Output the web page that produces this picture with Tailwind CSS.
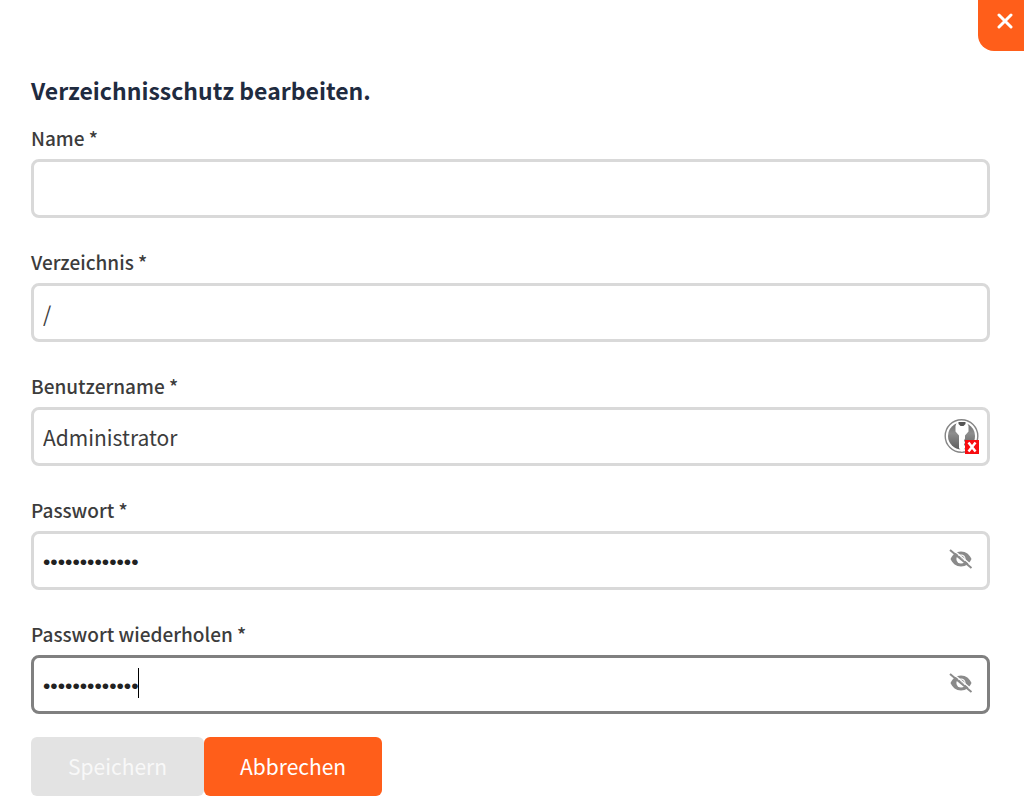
<!DOCTYPE html>
<html lang="de">
<head>
    <meta charset="UTF-8">
    <meta name="viewport" content="width=device-width, initial-scale=1.0">
    <title>Verzeichnisschutz bearbeiten</title>
    <script src="https://cdn.jsdelivr.net/npm/@tailwindcss/browser@4"></script>
</head>
<body class="bg-white font-['Noto_Sans_CJK_SC',sans-serif] text-[#3c3c3c]">
    <header class="flex justify-end">
        <button type="button" aria-label="Schließen" class="flex h-[51px] w-[46px] items-center justify-center rounded-bl-2xl bg-[#ff5e1a] pb-[9px] pl-[7px] text-white">
            <svg class="size-4" viewBox="0 0 16 16" fill="none" stroke="currentColor" stroke-width="3" stroke-linecap="round">
                <path d="M2 2l12 12M14 2L2 14" />
            </svg>
        </button>
    </header>

    <main class="pt-[23px] pr-[34px] pl-[31px]">
        <h1 class="text-[23px] leading-8 font-bold text-[#1f2b40]">Verzeichnisschutz bearbeiten.</h1>

        <form class="pt-4">
            <div class="mb-7">
                <label for="name" class="mb-[5px] block text-[19px] leading-8 font-medium">Name *</label>
                <input id="name" type="text" class="block h-[59px] w-full rounded-lg border-3 border-[#d9d9d9] px-[9px] text-[21px] outline-none">
            </div>

            <div class="mb-7">
                <label for="directory" class="mb-[5px] block text-[19px] leading-8 font-medium">Verzeichnis *</label>
                <input id="directory" type="text" value="/" class="block h-[59px] w-full rounded-lg border-3 border-[#d9d9d9] px-[9px] text-[21px] outline-none">
            </div>

            <div class="mb-7">
                <label for="username" class="mb-[5px] block text-[19px] leading-8 font-medium">Benutzername *</label>
                <div class="relative">
                    <input id="username" type="text" value="Administrator" class="block h-[59px] w-full rounded-lg border-3 border-[#d9d9d9] pr-14 pl-[9px] text-[21px] outline-none">
                    <svg class="absolute top-[11px] right-[10px] size-9" viewBox="0 0 36 36">
                        <defs>
                            <linearGradient id="disc" x1="0" y1="0" x2="0" y2="1">
                                <stop offset="0" stop-color="#6e6e6e" />
                                <stop offset="0.400" stop-color="#8e8e8e" />
                                <stop offset="1" stop-color="#5c5c5c" />
                            </linearGradient>
                        </defs>
                        <circle cx="17.500" cy="18" r="16.300" fill="#fff" stroke="#858585" stroke-width="1.400" />
                        <circle cx="17.500" cy="18" r="13.500" fill="url(#disc)" />
                        <path d="M13 3.500L11.500 8v5.500l3.500 4V30l3 4 3-4v-2l-1-1.500 1-2-1-2 1-2v-3l3.500-4V8l-2-4.500z" fill="#fff" />
                        <path d="M14.500 4h7v2l-2 2h-3l-2-2z" fill="#555" />
                        <rect x="21" y="22" width="14" height="14" fill="#f80c10" />
                        <path d="M24.500 24.500l7 9M31.500 24.500l-7 9" stroke="#fff" stroke-width="2.500" />
                    </svg>
                </div>
            </div>

            <div class="mb-7">
                <label for="password" class="mb-[5px] block text-[19px] leading-8 font-medium">Passwort *</label>
                <div class="relative">
                    <input id="password" type="password" value="geheim1234567" class="block h-[59px] w-full rounded-lg border-3 border-[#d9d9d9] pt-[3px] pr-14 pl-[9px] font-['Liberation_Sans',sans-serif] text-[21px] text-[#222] outline-none">
                    <button type="button" aria-label="Passwort anzeigen" class="absolute top-[16px] right-[17px] text-[#8a8a8a]">
                        <svg class="size-6" viewBox="0 0 24 24">
                            <path d="M1.500 12C3.500 7.500 7 4.500 12 4.500S20.500 7.500 22.500 12C20.500 16.500 17 19.500 12 19.500S3.500 16.500 1.500 12z" fill="currentColor" />
                            <circle cx="12" cy="12" r="4.600" fill="#fff" />
                            <path d="M9.500 9.500a3.600 3.600 0 0 1 6 3.500z" fill="currentColor" />
                            <path d="M2.500 1.500l21 17.500" stroke="#fff" stroke-width="1.500" />
                            <path d="M1 3l21.500 18" stroke="currentColor" stroke-width="2" />
                        </svg>
                    </button>
                </div>
            </div>

            <div class="mb-[23px]">
                <label for="password-repeat" class="mb-[5px] block text-[19px] leading-8 font-medium">Passwort wiederholen *</label>
                <div class="relative">
                    <input id="password-repeat" type="password" value="geheim1234567" class="block h-[59px] w-full rounded-lg border-3 border-[#808080] pt-[3px] pr-14 pl-[9px] font-['Liberation_Sans',sans-serif] text-[21px] text-[#222] outline-none">
                    <span class="absolute top-[13px] left-[107px] h-[30px] w-px bg-black"></span>
                    <button type="button" aria-label="Passwort anzeigen" class="absolute top-[16px] right-[17px] text-[#8a8a8a]">
                        <svg class="size-6" viewBox="0 0 24 24">
                            <path d="M1.500 12C3.500 7.500 7 4.500 12 4.500S20.500 7.500 22.500 12C20.500 16.500 17 19.500 12 19.500S3.500 16.500 1.500 12z" fill="currentColor" />
                            <circle cx="12" cy="12" r="4.600" fill="#fff" />
                            <path d="M9.500 9.500a3.600 3.600 0 0 1 6 3.500z" fill="currentColor" />
                            <path d="M2.500 1.500l21 17.500" stroke="#fff" stroke-width="1.500" />
                            <path d="M1 3l21.500 18" stroke="currentColor" stroke-width="2" />
                        </svg>
                    </button>
                </div>
            </div>

            <div class="flex">
                <button type="submit" disabled class="h-[59px] rounded-md bg-[#e3e3e3] px-[37px] text-[21px] text-[#f8f8f8]">Speichern</button>
                <button type="button" class="h-[59px] rounded-md bg-[#ff5e1a] px-9 text-[21px] text-white">Abbrechen</button>
            </div>
        </form>
    </main>
</body>
</html>
